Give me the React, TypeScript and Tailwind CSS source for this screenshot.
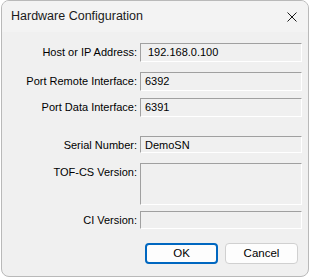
import React from 'react';

const labelCls = "w-[138px] pr-[3px] h-[19px] flex items-center justify-end shrink-0";
const fieldCls = "flex-1 border-t border-l border-t-[#a0a0a0] border-l-[#a0a0a0] border-b border-r border-b-white border-r-white bg-[#f0f0f0] flex items-start";

function Row({ label, value, h = "h-[19px]", mt, pl = "pl-[4px]" }: { label: string; value?: string; h?: string; mt: string; pl?: string }) {
    return (
        <div className={`flex items-start pr-[6px] ${mt}`}>
            <div className={labelCls}>{label}</div>
            <div className={`${fieldCls} ${h}`}>
                {value && <span className={`${pl} leading-[17px]`}>{value}</span>}
            </div>
        </div>
    );
}

export default function App() {
    return (
        <div className="w-[312px] h-[278px] bg-white">
            <div className="ml-[1px] w-[308px] h-[277px] rounded-[8px] border border-[#b9b9b9] overflow-hidden flex flex-col bg-[#f0f0f0]">
                <div className="h-[31px] bg-[#f3f3f3] flex items-center justify-between pl-[9px] pr-[10px] shrink-0">
                    <span className="text-[12.5px] text-[#1a1a1a]" style={{ fontFamily: '"Liberation Sans", Arial, sans-serif' }}>Hardware Configuration</span>
                    <svg width="10" height="10" viewBox="0 0 10 10" className="mr-[1px] mt-[1px]">
                        <path d="M0.5 0.5 L9.5 9.5 M9.5 0.5 L0.5 9.5" stroke="#1a1a1a" strokeWidth="1" fill="none" />
                    </svg>
                </div>
                <div className="flex-1 flex flex-col text-[11px] text-black" style={{ fontFamily: '"Liberation Sans", Arial, sans-serif' }}>
                    <Row label="Host or IP Address:" value="192.168.0.100" mt="mt-[11px]" pl="pl-[7px]" />
                    <Row label="Port Remote Interface:" value="6392" mt="mt-[10px]" />
                    <Row label="Port Data Interface:" value="6391" mt="mt-[7px]" />
                    <Row label="Serial Number:" value="DemoSN" h="h-[17px]" mt="mt-[19px]" />
                    <Row label="TOF-CS Version:" h="h-[42px]" mt="mt-[8px]" />
                    <Row label="CI Version:" h="h-[18px]" mt="mt-[6px]" />
                    <div className="flex justify-end gap-[7px] pr-[10px] mt-[13px]">
                        <button className="w-[73px] h-[21px] rounded-[4px] border-2 border-[#0067c0] bg-[#fdfdfd] text-[11.5px] text-black" style={{ fontFamily: '"Liberation Sans", sans-serif' }}>OK</button>
                        <button className="w-[73px] h-[21px] rounded-[4px] border border-[#d0d0d0] bg-[#fdfdfd] text-[11.5px] text-black" style={{ fontFamily: '"Liberation Sans", sans-serif' }}>Cancel</button>
                    </div>
                </div>
            </div>
        </div>
    );
}
